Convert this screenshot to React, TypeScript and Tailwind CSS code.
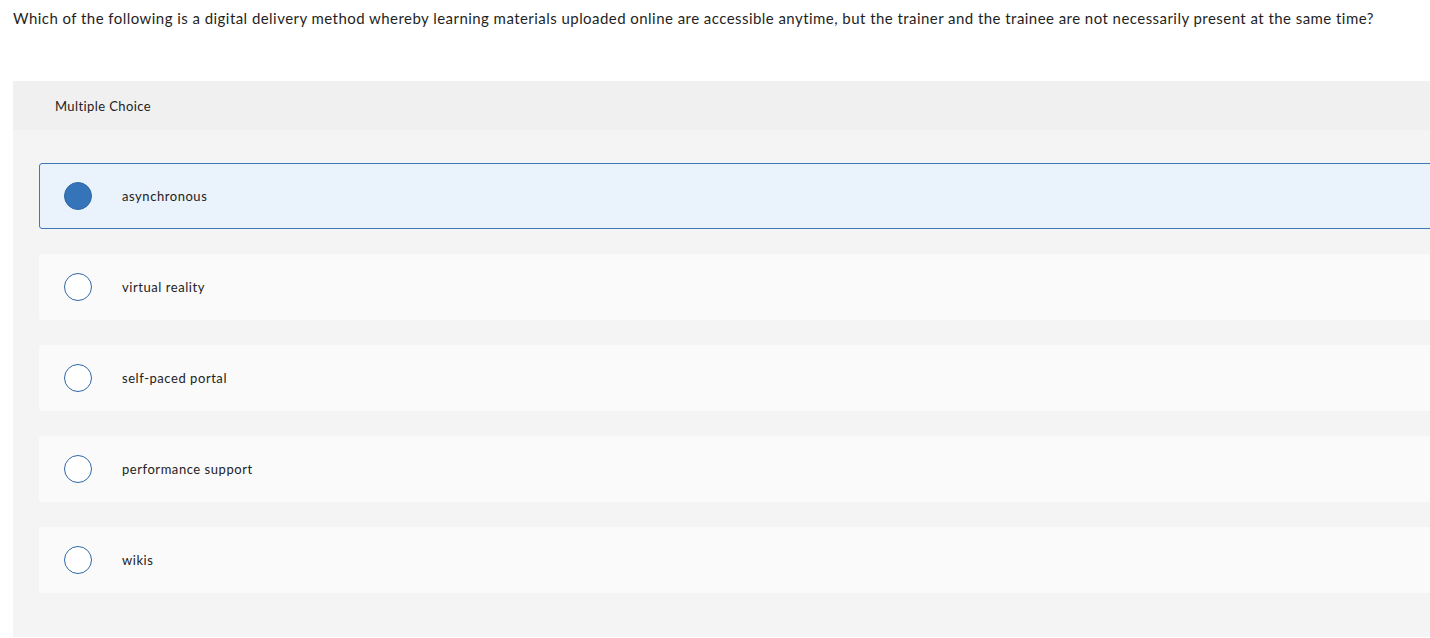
const OPTIONS = ["asynchronous", "virtual reality", "self-paced portal", "performance support", "wikis"];

export default function App() {
  const selected = 0;
  return (
    <div className="w-[1430px] h-[638px] overflow-hidden bg-white text-[#1f1f1f]" style={{ fontFamily: "Lato, 'Open Sans', sans-serif" }}>
      <p className="pl-[13px] pt-[8px] text-[15px] leading-[20px] tracking-[0.45px]">
        Which of the following is a digital delivery method whereby learning materials uploaded online are accessible anytime, but the trainer and the trainee are not necessarily present at the same time?
      </p>

      <div className="ml-[13px] mt-[53px] w-[1460px] bg-[#f4f4f4] pb-[44px]">
        <div className="h-[49px] bg-[#f0f0f0] pl-[42px] pt-[2px] flex items-center text-[13px] tracking-[0.4px] text-[#222]">
          Multiple Choice
        </div>
        <div className="pl-[26px] pt-[33px] flex flex-col gap-[25px]">
          {OPTIONS.map((o, i) => {
            const on = i === selected;
            return (
              <div
                key={o}
                className={`h-[66px] flex items-center rounded-[3px] border ${on ? "bg-[#eaf2fb] border-[#3b78c0]" : "bg-[#fafafa] border-transparent"}`}
              >
                <span
                  className={`ml-[24px] w-[28px] h-[28px] rounded-full border-[1.5px] border-[#2f68a6] ${on ? "bg-[#3574b8]" : "bg-white"}`}
                />
                <span className="ml-[30px] pt-[2px] text-[13px] tracking-[0.55px] text-[#222]">{o}</span>
              </div>
            );
          })}
        </div>
      </div>
    </div>
  );
}
